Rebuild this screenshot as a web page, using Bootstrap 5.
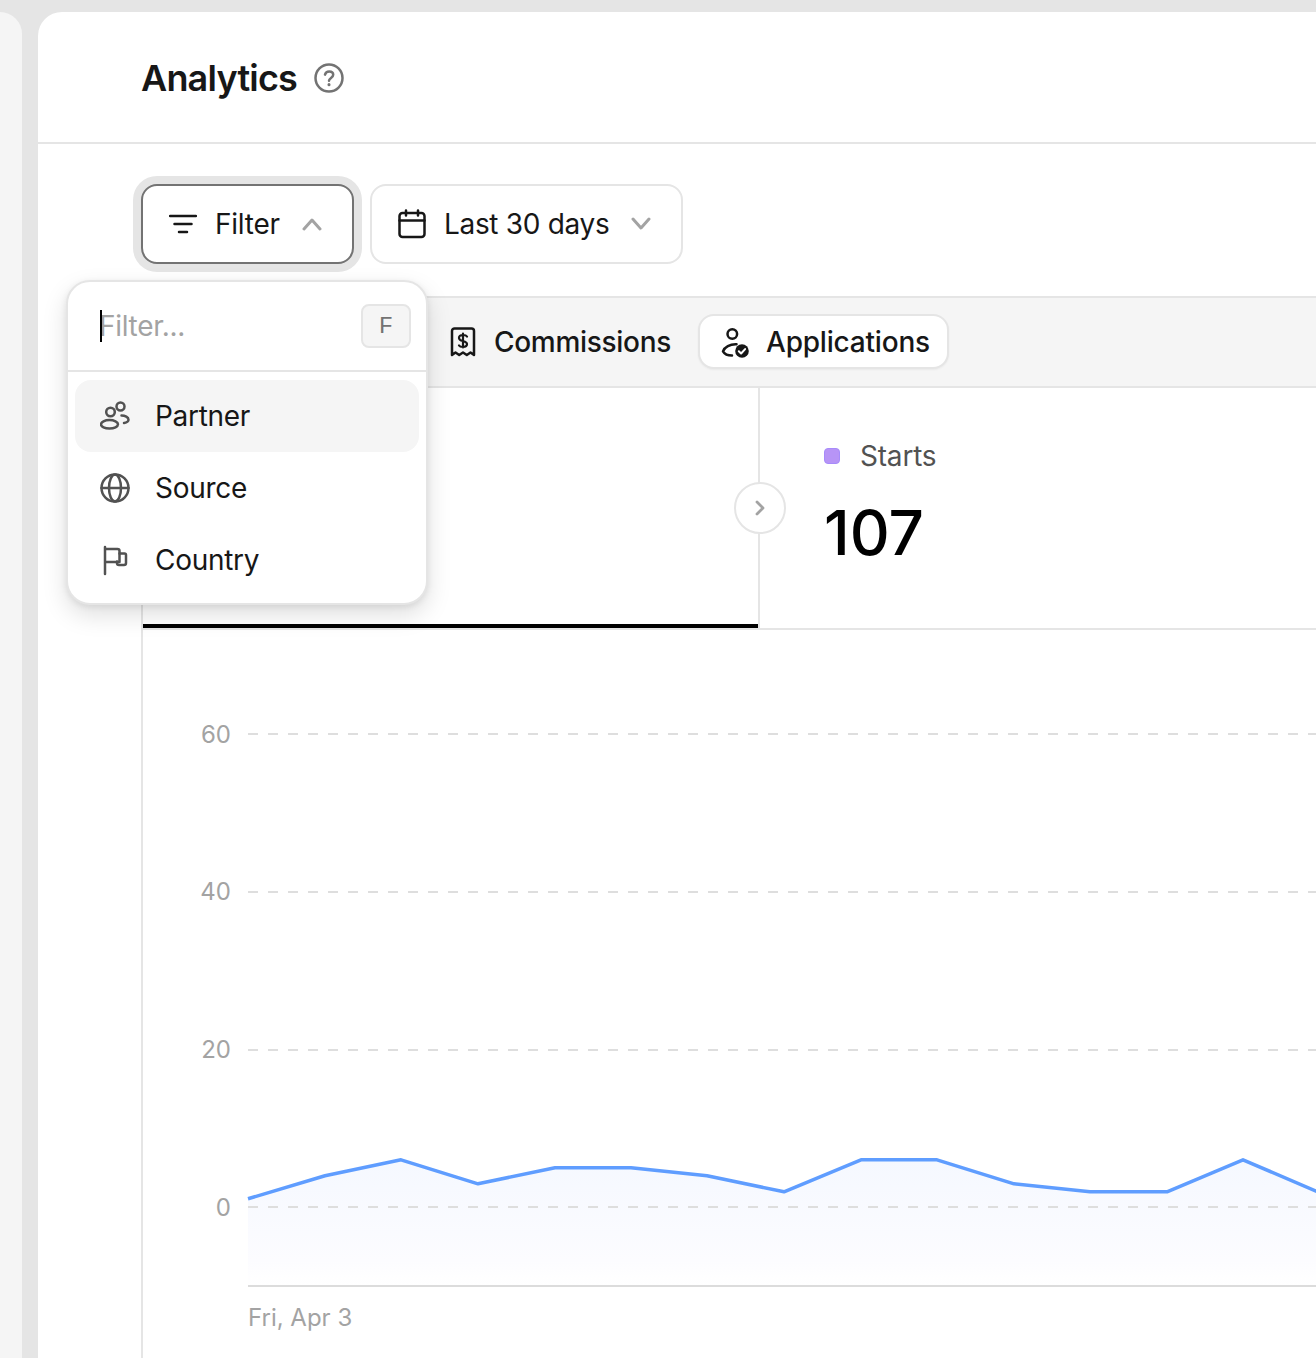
<!DOCTYPE html>
<html lang="en">
<head>
<meta charset="utf-8">
<title>Analytics</title>
<link href="https://cdn.jsdelivr.net/npm/bootstrap@5.3.0/dist/css/bootstrap.min.css" rel="stylesheet">
<style>
html,body{height:1358px;overflow:hidden}
body{background:#e5e5e5;font-family:Inter,"Liberation Sans",sans-serif;color:#171717;padding-top:12px;gap:16px}
.side-rail{width:22px;flex:none;background:#f5f5f5;border-top-right-radius:24px}
.main-panel{flex:1;min-width:0;background:#fff;border-top-left-radius:24px}
.page-head{height:132px;padding:2px 0 0 103px;border-bottom:2px solid #e5e5e5;gap:16px}
.page-head h1{font-size:36px;font-weight:600;margin:0;line-height:44px;letter-spacing:-.8px}
.toolbar{padding:40px 0 0 103px;gap:16px;height:152px}
.tool-btn{height:80px;font-size:28px;line-height:34px;letter-spacing:-.25px;white-space:nowrap;color:#171717;background:#fff;border:2px solid #e5e5e5;border-radius:16px;gap:18px;padding:0 0 0 26px;--bs-btn-hover-bg:#fff;--bs-btn-hover-color:#171717}
.tool-btn.active-ring{border-color:#737373;box-shadow:0 0 0 8px #e5e5e5;width:213px}
.tool-btn.date{width:313px;letter-spacing:-.32px}
.chart-card{margin-left:103px;margin-right:-60px;border:2px solid #e5e5e5;border-bottom:0;border-right:0;border-radius:0;height:1100px}
.tab-bar{height:90px;background:#f5f5f5;border-bottom:2px solid #e5e5e5;padding:16px 0 0 284px;gap:8px;align-items:flex-start}
.tab-item{height:55px;font-size:28px;font-weight:500;line-height:34px;letter-spacing:-.3px;color:#171717;padding:0 17px 0 21px;gap:18px;border:2px solid transparent;border-radius:16px}
.tab-item.selected{background:#fff;border-color:#e5e5e5;box-shadow:0 1px 2px rgba(0,0,0,.05);gap:17px;letter-spacing:-.2px}
.metric-row{height:242px;border-bottom:2px solid #e5e5e5}
.metric-first{width:615px;height:240px;border-bottom:4px solid #000}
.metric-next{border-left:2px solid #e5e5e5;padding:48px 0 0 64px;flex:1}
.step-circle{position:absolute;left:591px;top:94px;width:52px;height:52px;border:2px solid #e5e5e5;border-radius:50%;background:#fff;z-index:1}
.metric-label{font-size:28px;line-height:40px;letter-spacing:-.2px;color:#525252;gap:20px}
.metric-dot{width:16px;height:16px;border-radius:4px;background:#b794f6;border:1px solid #a78bfa}
.metric-value{font-size:62px;font-weight:500;line-height:72px;color:#000;margin-top:21px}
.chart-svg{display:block}
.chart-svg text{font-family:Inter,"Liberation Sans",sans-serif;font-size:24px;fill:#a3a3a3}
.filter-pop{position:absolute;left:28px;top:268px;width:362px;height:325px;border:2px solid #e5e5e5;border-radius:24px;background:#fff;box-shadow:0 2px 6px rgba(0,0,0,.08),0 10px 24px rgba(0,0,0,.13);z-index:5;overflow:hidden}
.pop-head{height:90px;border-bottom:2px solid #e5e5e5;padding:0 15px 0 32px}
.pop-field{position:relative;height:32px;width:200px}
.pop-field::before{content:"";position:absolute;left:0;top:0;width:2px;height:32px;background:#000;z-index:1}
.pop-input{border:0;border-radius:0;padding:0;font-size:28px;letter-spacing:-.3px;text-indent:-1px;height:32px;box-shadow:none;line-height:32px;background:transparent}
.pop-input::placeholder{color:#a3a3a3;opacity:1}
.pop-key{width:50px;height:44px;border:2px solid #e5e5e5;background:#f5f5f5;border-radius:8px;font-size:24px;color:#737373;padding-top:2px!important}
.pop-list{padding:8px 7px}
.pop-list .list-group-item{height:72px;flex:none;border:0;border-radius:16px;padding:0 24px 0 25px;gap:23px;font-size:28px;letter-spacing:-.3px;color:#171717;background:transparent}
.pop-list .list-group-item.hl{background:#f5f5f5}
.pop-ico{flex:none;width:32px;height:32px;fill:none;stroke:#525252;stroke-width:2.5;stroke-linecap:round;stroke-linejoin:round}
</style>
</head>
<body class="d-flex m-0">
<div class="side-rail"></div>
<main class="main-panel position-relative">
  <header class="page-head d-flex align-items-center">
    <h1>Analytics</h1>
    <svg width="32" height="32" viewBox="0 0 32 32" fill="none" stroke="#737373" stroke-width="2.5" stroke-linecap="round" stroke-linejoin="round"><circle cx="16" cy="16" r="13.500"/><path d="M12 12.600c.6-2.200 2.200-3.200 4.200-3.200 2.300 0 4 1.400 4 3.400 0 3-4.200 3.300-4.200 6"/><path d="M16 22.600v.2" stroke-width="3"/></svg>
  </header>
  <div class="toolbar d-flex align-items-start">
    <button type="button" class="btn tool-btn active-ring d-flex align-items-center">
      <svg class="flex-shrink-0" width="28" height="24" viewBox="0 0 28 24" fill="none" stroke="#171717" stroke-width="2.500" stroke-linecap="round"><path d="M1 4h26M5.500 12h17M10 20h8"/></svg>
      <span>Filter</span>
      <svg class="ms-1 flex-shrink-0" width="20" height="14" viewBox="0 0 20 14" fill="none" stroke="#a3a3a3" stroke-width="3" stroke-linecap="round" stroke-linejoin="round"><path d="M2 12l8-9 8 9"/></svg>
    </button>
    <button type="button" class="btn tool-btn date d-flex align-items-center">
      <svg class="flex-shrink-0" width="28" height="30" viewBox="0 0 28 30" fill="none" stroke="#171717" stroke-width="2.500" stroke-linecap="round" stroke-linejoin="round"><rect x="1.500" y="4" width="25" height="24" rx="3"/><path d="M1.500 11.500h25M8 1.500v5M20 1.500v5"/></svg>
      <span>Last 30 days</span>
      <svg class="ms-1 flex-shrink-0" width="20" height="14" viewBox="0 0 20 14" fill="none" stroke="#a3a3a3" stroke-width="3" stroke-linecap="round" stroke-linejoin="round"><path d="M2 2l8 9 8-9"/></svg>
    </button>
  </div>
  <section class="card chart-card">
    <nav class="tab-bar nav">
      <div class="tab-item d-flex align-items-center">
        <svg class="flex-shrink-0" width="26" height="30" viewBox="0 0 26 30" fill="none" stroke="#171717" stroke-width="2.500" stroke-linecap="round" stroke-linejoin="round"><path d="M2 4a2.500 2.500 0 0 1 2.500-2.500h17A2.500 2.500 0 0 1 24 4v24l-3.500-2.500-3.700 2.500-3.800-2.500-3.800 2.500-3.700-2.500L2 28z"/><path d="M13 6.500v14M17 9.500c-.6-1-2-1.500-4-1.500-2.400 0-4 1-4 2.900 0 4.200 8 2 8 6.200 0 1.900-1.600 2.900-4 2.900-2 0-3.400-.5-4-1.500" stroke-width="2.200"/></svg>
        <span>Commissions</span>
      </div>
      <div class="tab-item selected d-flex align-items-center">
        <svg class="flex-shrink-0" width="28" height="32" viewBox="0 0 28 32" fill="none" stroke="#171717" stroke-width="2.500" stroke-linecap="round" stroke-linejoin="round"><circle cx="11.300" cy="8" r="4.800"/><path d="M15.500 18.300C9 18 3.500 21 2 25.300C3.500 28 7 29.500 11 29.500"/><circle cx="21" cy="25" r="6.800" fill="#171717" stroke="none"/><path d="M17.800 25.200l2.300 2.300 4-4.400" stroke="#fff" stroke-width="2"/></svg>
        <span>Applications</span>
      </div>
    </nav>
    <div class="metric-row d-flex">
      <div class="metric-first position-relative flex-shrink-0">
        <span class="step-circle d-flex align-items-center justify-content-center">
          <svg width="10" height="16" viewBox="0 0 10 16" fill="none" stroke="#a3a3a3" stroke-width="2.800" stroke-linecap="round" stroke-linejoin="round"><path d="M2 2l6 6-6 6"/></svg>
        </span>
      </div>
      <div class="metric-next">
        <div class="metric-label d-flex align-items-center"><span class="metric-dot"></span><span>Starts</span></div>
        <div class="metric-value">107</div>
      </div>
    </div>
    <svg class="chart-svg" width="1173" height="728" viewBox="143 630 1173 728">
      <defs><linearGradient id="fade" x1="0" y1="0" x2="0" y2="1"><stop offset="0" stop-color="#f5f8ff"/><stop offset=".8" stop-color="#fcfcff"/><stop offset="1" stop-color="#fff"/></linearGradient></defs>
      <path d="M248 1198.800L325 1175.800L401 1159.800L478 1183.800L555 1167.800L631 1167.800L707 1175.800L784 1191.800L861 1159.800L937 1159.800L1014 1183.800L1090 1191.800L1167 1191.800L1243 1159.800L1320 1192.800V1286H248Z" fill="url(#fade)"/>
      <g stroke="#dedede" stroke-width="2" stroke-dasharray="10 10">
        <path d="M248 734H1320M248 892H1320M248 1050H1320M248 1207H1320"/>
      </g>
      <path d="M248 1286H1320" stroke="#dcdcdc" stroke-width="2"/>
      <path d="M248 1198.800L325 1175.800L401 1159.800L478 1183.800L555 1167.800L631 1167.800L707 1175.800L784 1191.800L861 1159.800L937 1159.800L1014 1183.800L1090 1191.800L1167 1191.800L1243 1159.800L1320 1192.800" fill="none" stroke="#5f9dff" stroke-width="3.500" stroke-linejoin="round"/>
      <g text-anchor="end">
        <text x="231" y="743">60</text>
        <text x="231" y="900">40</text>
        <text x="231" y="1058">20</text>
        <text x="231" y="1216">0</text>
      </g>
      <text x="248" y="1326">Fri, Apr 3</text>
    </svg>
  </section>
  <div class="filter-pop">
    <div class="pop-head d-flex align-items-center justify-content-between">
      <div class="pop-field"><input class="form-control pop-input" type="text" placeholder="Filter..." aria-label="Filter"></div>
      <kbd class="pop-key d-flex align-items-center justify-content-center p-0 shadow-none">F</kbd>
    </div>
    <div class="list-group pop-list">
      <div class="list-group-item hl d-flex flex-row align-items-center">
        <svg class="pop-ico" viewBox="0 0 32 32"><circle cx="10.500" cy="12" r="4.300"/><circle cx="20.500" cy="6.500" r="4"/><ellipse cx="9.500" cy="24.300" rx="8.500" ry="4.200"/><path d="M21.500 15.500c3.500 0 7 1.800 7 4.200 0 1.500-1.500 2.700-4.500 3.300"/></svg>
        <span>Partner</span>
      </div>
      <div class="list-group-item d-flex flex-row align-items-center">
        <svg class="pop-ico" viewBox="0 0 32 32"><circle cx="15" cy="16" r="13.500"/><ellipse cx="15" cy="16" rx="6" ry="13.500"/><path d="M1.500 16h27"/></svg>
        <span>Source</span>
      </div>
      <div class="list-group-item d-flex flex-row align-items-center">
        <svg class="pop-ico" viewBox="0 0 32 32"><path d="M5 3v27M5 5h12.500a2 2 0 0 1 2 2v11H5"/><path d="M19.500 9.500h5a1.500 1.500 0 0 1 1.500 1.500v8a2 2 0 0 1-2 2h-5a2 2 0 0 1-2-2v-1.500"/></svg>
        <span>Country</span>
      </div>
    </div>
  </div>
</main>
<script src="https://cdn.jsdelivr.net/npm/bootstrap@5.3.0/dist/js/bootstrap.bundle.min.js"></script>
</body>
</html>
